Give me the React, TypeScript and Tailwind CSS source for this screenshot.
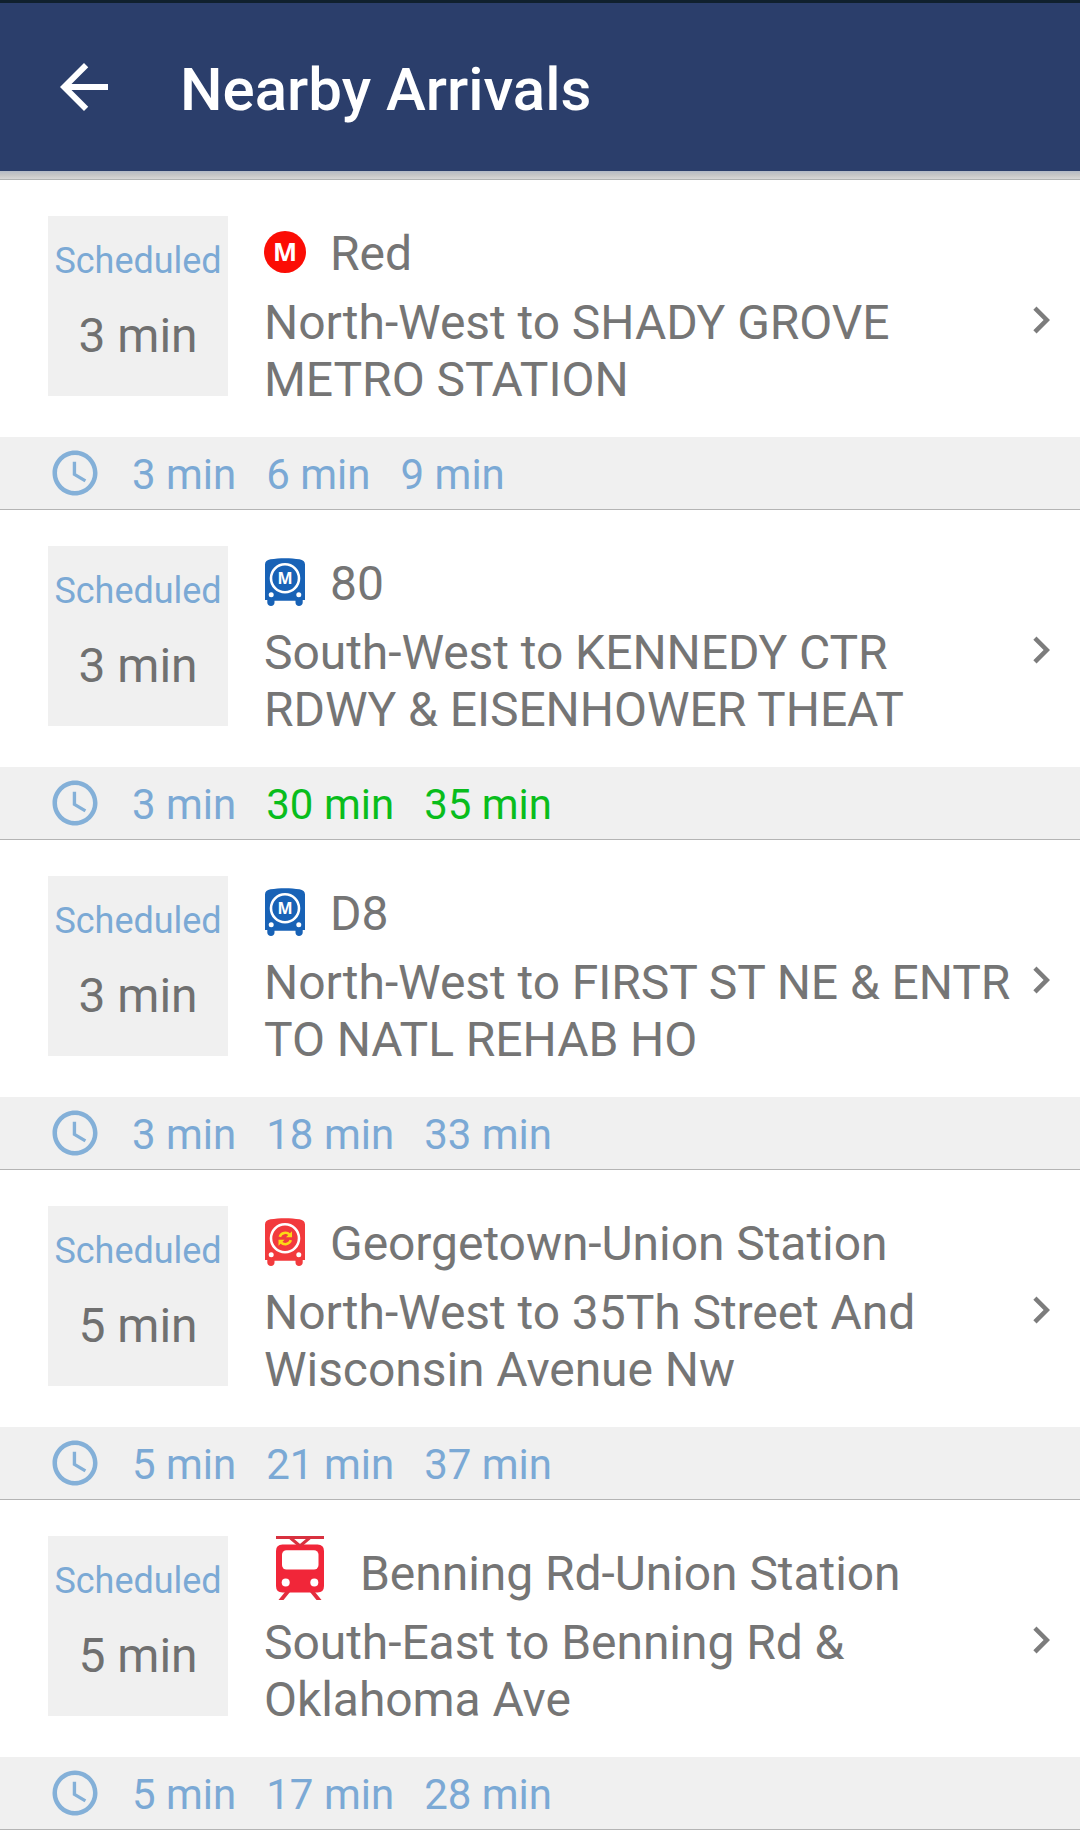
import React from "react"
import { MdAccessTime, MdArrowBack, MdChevronRight } from "react-icons/md"

type IconName = "metro" | "bus" | "circulator" | "streetcar"

interface Departure {
    label: string
    live?: boolean
}

interface Arrival {
    id: number
    icon: IconName
    route: string
    headsign: string
    departures: Departure[]
}

const arrivals: Arrival[] = [
    {
        id: 1,
        icon: "metro",
        route: "Red",
        headsign: "North-West to SHADY GROVE METRO STATION",
        departures: [{ label: "3 min" }, { label: "6 min" }, { label: "9 min" }],
    },
    {
        id: 2,
        icon: "bus",
        route: "80",
        headsign: "South-West to KENNEDY CTR RDWY & EISENHOWER THEAT",
        departures: [{ label: "3 min" }, { label: "30 min", live: true }, { label: "35 min", live: true }],
    },
    {
        id: 3,
        icon: "bus",
        route: "D8",
        headsign: "North-West to FIRST ST NE & ENTR TO NATL REHAB HO",
        departures: [{ label: "3 min" }, { label: "18 min" }, { label: "33 min" }],
    },
    {
        id: 4,
        icon: "circulator",
        route: "Georgetown-Union Station",
        headsign: "North-West to 35Th Street And Wisconsin Avenue Nw",
        departures: [{ label: "5 min" }, { label: "21 min" }, { label: "37 min" }],
    },
    {
        id: 5,
        icon: "streetcar",
        route: "Benning Rd-Union Station",
        headsign: "South-East to Benning Rd & Oklahoma Ave",
        departures: [{ label: "5 min" }, { label: "17 min" }, { label: "28 min" }],
    },
]

const MetroIcon = () => (
    <svg className="mb-[3px] h-[42px] w-[42px] shrink-0" viewBox="0 0 42 42">
        <circle cx="21" cy="21" r="21" fill="#fb0d05" />
        <text x="21" y="30" textAnchor="middle" fontFamily="Open Sans" fontWeight="700" fontSize="25" textLength="24" lengthAdjust="spacingAndGlyphs" fill="#fff">
            M
        </text>
    </svg>
)

// bus body shared by Metrobus and Circulator
const BusBody = ({ color, children }: { color: string; children: React.ReactNode }) => (
    <svg className="mb-[3px] h-[48px] w-[42px] shrink-0" viewBox="0 0 42 48">
        <path
            d="M1 6.500C1 3.500 3 2 6.500 1.300C15 -.2 27 -.2 35.500 1.300C39 2 41 3.500 41 6.500V42H38.700V44.500C38.700 46.500 37 48 35 48C33 48 31.500 46.500 31.500 44.500V42.700H10.500V44.500C10.500 46.500 9 48 7 48C5 48 3.300 46.500 3.300 44.500V42H1Z"
            fill={color}
        />
        <circle cx="21" cy="20.300" r="14" fill="none" stroke="#fff" strokeWidth="2.600" />
        <circle cx="7.200" cy="36.800" r="2.500" fill="#fff" />
        <circle cx="34.800" cy="36.800" r="2.500" fill="#fff" />
        {children}
    </svg>
)

const BusIcon = () => (
    <BusBody color="#1862b6">
        <text x="21" y="26" textAnchor="middle" fontFamily="Open Sans" fontWeight="700" fontSize="16" textLength="15" lengthAdjust="spacingAndGlyphs" fill="#fff">
            M
        </text>
    </BusBody>
)

const CirculatorIcon = () => (
    <BusBody color="#f23a3d">
        <path d="M15.800 18.800A5.800 5.800 0 0 1 25.600 16.700" fill="none" stroke="#fbd916" strokeWidth="2.600" />
        <path d="M28 13.300V19.300H22Z" fill="#fbd916" />
        <path d="M26.800 22.200A5.800 5.800 0 0 1 17 24.300" fill="none" stroke="#fbd916" strokeWidth="2.600" />
        <path d="M14.500 27.700V21.700H20.500Z" fill="#fbd916" />
    </BusBody>
)

const StreetcarIcon = () => (
    <svg className="mx-3 mb-[11px] h-[64px] w-[48px] shrink-0" viewBox="0 0 48 64">
        <path d="M0 1.500H48" stroke="#d8313f" strokeWidth="3" />
        <path d="M14.500 2L24 10L33.500 2" fill="none" stroke="#d8313f" strokeWidth="3" />
        <path d="M6.500 8.500H21L24 11L27 8.500H41.500Q48 8.500 48 15V50Q48 56.500 41.500 56.500H6.500Q0 56.500 0 50V15Q0 8.500 6.500 8.500Z" fill="#f12639" />
        <rect x="6" y="14.200" width="36.500" height="19.300" rx="4.500" fill="#fff" />
        <circle cx="9.700" cy="46.500" r="4" fill="#fff" />
        <circle cx="38.300" cy="46.500" r="4" fill="#fff" />
        <path d="M9 56H14L7.500 64H2.500ZM34 56H39L45.500 64H40.500Z" fill="#e32c3c" />
    </svg>
)

const icons: Record<IconName, React.FC> = {
    metro: MetroIcon,
    bus: BusIcon,
    circulator: CirculatorIcon,
    streetcar: StreetcarIcon,
}

const ArrivalRow = ({ arrival }: { arrival: Arrival }) => {
    const Icon = icons[arrival.icon]

    return (
        <li className="h-[330px] border-b border-[#b4b4b4]">
            <div className="flex h-[257px] pl-12">
                <div className="mt-9 flex h-[180px] w-[180px] shrink-0 flex-col items-center bg-[#f0f0f0] whitespace-nowrap">
                    <span className="mt-6 text-[36px] leading-[42px] tracking-[-0.05px] text-[#7ba9d5]">Scheduled</span>
                    <span className="mt-[25px] text-[48px] leading-[57px] text-[#707070]">
                        {arrival.departures[0].label}
                    </span>
                </div>

                <div className="ml-9 w-[750px] shrink-0 pt-9 text-[48px] leading-[57px] tracking-[-0.06px] text-[#757575]">
                    <div className="mb-[3px] flex h-[75px] items-center">
                        <Icon />
                        <span className="ml-6 whitespace-nowrap">{arrival.route}</span>
                    </div>
                    <p>{arrival.headsign}</p>
                </div>

                <MdChevronRight className="mt-[113px] h-[54px] w-[54px] shrink-0 text-[#7c7c7c]" />
            </div>

            {/* upcoming departures */}
            <div className="flex h-[72px] items-center bg-[#f0f0f0] pl-12 text-[42px] leading-[50px]">
                <MdAccessTime className="mr-[30px] h-[54px] w-[54px] text-[#84b0d8]" />
                {arrival.departures.map((departure) => (
                    <span
                        key={departure.label}
                        className={departure.live ? "mt-1 mr-[30px] text-[#09bd1c]" : "mt-1 mr-[30px] text-[#7ba9d5]"}
                    >
                        {departure.label}
                    </span>
                ))}
            </div>
        </li>
    )
}

export default function App() {
    return (
        <div className="h-[1848px] w-[1080px] overflow-hidden bg-white font-['Roboto',sans-serif]">
            <div className="h-[3px] bg-[#10202d]" />
            <header className="flex h-[168px] items-center bg-[#2b3e6b] pl-12 text-white">
                <MdArrowBack className="h-[72px] w-[72px]" />
                <h1 className="mt-[5px] ml-[60px] text-[60px] leading-[70px] font-medium">Nearby Arrivals</h1>
            </header>
            <div className="h-[9px] border-b border-[#b1b3b3] bg-linear-to-b from-[#b3bac6] via-[#c6c6c6] to-[#d8d8d8]" />
            <ul>
                {arrivals.map((arrival) => (
                    <ArrivalRow key={arrival.id} arrival={arrival} />
                ))}
            </ul>
        </div>
    )
}
